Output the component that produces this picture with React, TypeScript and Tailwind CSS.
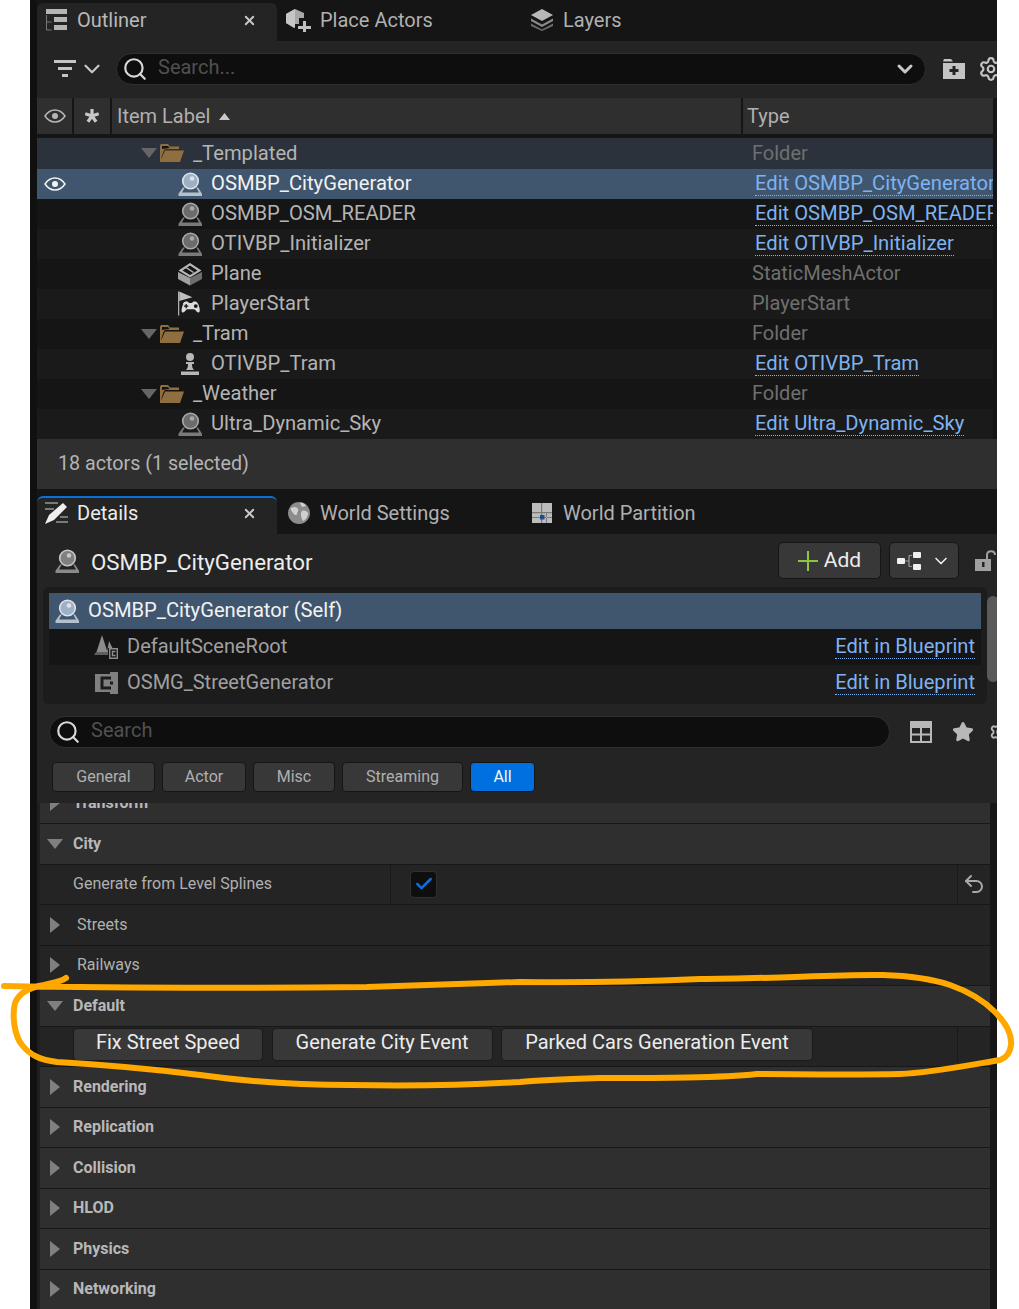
import React from "react";
import { ChevronDown, Search, Settings, Star, Undo2, X, Check } from "lucide-react";

const font = { fontFamily: "Roboto, 'Liberation Sans', sans-serif" };

const EyeIcon = ({ color = "#b5b5b5" }: { color?: string }) => (
  <svg width="22" height="14" viewBox="0 0 22 14" fill="none">
    <path d="M1 7C4 2.500 7.500 1 11 1s7 1.500 10 6c-3 4.500-6.500 6-10 6S4 11.500 1 7Z" stroke={color} strokeWidth="1.500" />
    <circle cx="11" cy="7" r="3" fill={color} />
  </svg>
);

const AsteriskIcon = () => (
  <svg width="16" height="16" viewBox="0 0 16 16" stroke="#c8c8c8" strokeWidth="3.200">
    <path d="M8 8V1M8 8l6.700-2.200M8 8l4.100 5.700M8 8l-4.100 5.700M8 8 1.300 5.800" />
  </svg>
);

const ActorIcon = ({ rim = "#a8a8a8", fill = "#6c6c6c", base = "#7a7a7a" }: { rim?: string; fill?: string; base?: string }) => (
  <svg width="24" height="24" viewBox="0 0 24 24">
    <circle cx="12.500" cy="9" r="8.600" fill={rim} />
    <circle cx="12.500" cy="9" r="7" fill={fill} />
    <circle cx="14" cy="6.500" r="2.300" fill={rim} />
    <path d="M5 15.500h1.800L4 20.500h17l-2.800-5H20l4 6.200V24H0.500v-2.300Z" fill={base} />
  </svg>
);

const SelectedActorIcon = () => <ActorIcon rim="#dde3ea" fill="#9fb0c4" base="#b4c0cc" />;

const FolderIcon = () => (
  <svg width="24" height="18" viewBox="0 0 24 18">
    <path d="M0 18V1.500L1 0h7l2 2.500h9V5H5L3.500 7 1.500 13V18Z" fill="#8f6f3f" />
    <path d="M0 18 5 6.500h19L20 18Z" fill="#8f6f3f" />
    <path d="M2 5V2h6l1.500 2Z" fill="#151515" />
  </svg>
);

const MeshIcon = () => (
  <svg width="24" height="24" viewBox="0 0 24 24">
    <path d="M0 10v7l12 6.500V16Z" fill="#a0a0a0" />
    <path d="M24 10v7l-12 6.500V16Z" fill="#6e6e6e" />
    <path d="M12 1 0.500 8.500 12 15.500l11.500-7ZM12 3.500l7.500 5-7.500 4.500-7.500-4.500Z" fill="#b8b8b8" fillRule="evenodd" />
    <path d="M8 5.500l7.500 5" stroke="#b8b8b8" strokeWidth="1.500" />
  </svg>
);

const PlayerStartIcon = () => (
  <svg width="25" height="25" viewBox="0 0 25 25">
    <path d="M0 0h1.300v25H0Z" fill="#b0b0b0" />
    <path d="M1.300 0 15 6 1.300 10Z" fill="#c0c0c0" />
    <path d="M5 13c1-2 2-2.500 4-2.500h1l1.500 1.500h3l1.500-1.500h1.500c2.500 0 3.500 2 4.500 5.500 1 3.500 1 6-.8 6-1.700 0-3-3.500-4.500-3.500h-7c-1.500 0-2.800 3.500-4.500 3.500-1.800 0-1.800-2.500-.8-6 .2-1 .5-2 1.100-3Z" fill="#dcdcdc" />
    <path d="M8.500 13v4.500M6.200 15.200h4.600" stroke="#151515" strokeWidth="1.400" />
    <circle cx="18.500" cy="15.200" r="2" fill="#151515" />
  </svg>
);

const PawnIcon = () => (
  <svg width="20" height="22" viewBox="0 0 20 22">
    <circle cx="10" cy="4" r="4" fill="#b8b8b8" />
    <path d="M6 9h8v2h-2c0 3 .5 4.500 2 6H6c1.500-1.500 2-3 2-6H6Z" fill="#b8b8b8" />
    <path d="M1 18.500h18V22H1Z" fill="#b8b8b8" />
  </svg>
);

const OutlinerIcon = () => (
  <svg width="22" height="22" viewBox="0 0 22 22">
    <path d="M1 0h21v5H1ZM9 8h13v5H9ZM9 16h13v5H9Z" fill="#b5b5b5" />
    <path d="M1.500 6v15h5M1.500 13h5" stroke="#777777" strokeWidth="1" fill="none" />
  </svg>
);

const PlaceActorsIcon = () => (
  <svg width="26" height="24" viewBox="0 0 26 24">
    <path d="M0 6 9 1l9 4v5h-5v6H9l-1 4-8-5Z" fill="#a8a8a8" />
    <path d="M9 1v19l-9-5V6Z" fill="#c6c6c6" />
    <path d="M17 13h3v5h5v3h-5v3h-3v-3h-5v-3h5Z" fill="#c0c0c0" />
  </svg>
);

const LayersIcon = () => (
  <svg width="22" height="22" viewBox="0 0 22 22">
    <path d="M11 0 22 6l-11 6L0 6Z" fill="#b8b8b8" />
    <path d="M0 9.500l11 6 11-6v2.500l-11 6-11-6Z" fill="#8a8a8a" />
    <path d="M0 14.500l11 6 11-6V17l-11 5-11-5Z" fill="#6e6e6e" />
  </svg>
);

const FilterIcon = () => (
  <svg width="22" height="18" viewBox="0 0 22 18" className="shrink-0">
    <path d="M0 0h22v3H0ZM4 7h14v3H4ZM8 14h6v3H8Z" fill="#c4c4c4" />
  </svg>
);

const FolderPlusIcon = () => (
  <svg width="22" height="20" viewBox="0 0 22 20">
    <path d="M0 2.500 1 0h7l2 2.500Z" fill="#c4c4c4" />
    <path d="M0 4h22v16H0Z" fill="#c4c4c4" />
    <path d="M9.500 7h3v3h3v3h-3v3h-3v-3h-3v-3h3Z" fill="#242424" />
  </svg>
);

const PencilIcon = () => (
  <svg width="24" height="24" viewBox="0 0 24 24">
    <path d="M1 1h13v2H1ZM1 7h9v2H1ZM12 20h12v2H12ZM16 15h8v2h-8Z" fill="#7a7a7a" />
    <path d="M19 2l4 4-13 13-9 4 4-9Z" fill="#eeeeee" />
  </svg>
);

const GlobeIcon = () => (
  <svg width="22" height="22" viewBox="0 0 22 22">
    <circle cx="11" cy="11" r="11" fill="#8c8c8c" />
    <path d="M3 6c3-2 6-1 7 1s-1 3-1 5-3 1-4-1-3-3-2-5ZM14 9c2-1 5 0 6 2 0 3-2 7-5 8-2-3-3-8-1-10ZM12 1c2-1 5 1 6 3l-4 1Z" fill="#d0d0d0" />
  </svg>
);

const PartitionIcon = () => (
  <svg width="20" height="20" viewBox="0 0 20 20">
    <rect width="20" height="20" fill="#bcbcbc" />
    <path d="M9 0h1.200v20H9ZM0 9h20v1.200H0ZM0 14h20v1H0ZM14 10v10h1V10Z" fill="#7a7a7a" />
    <rect x="8" y="12" width="4.500" height="4.500" fill="#1b4f94" />
  </svg>
);

const TreeNodesIcon = () => (
  <svg width="25" height="18" viewBox="0 0 25 18">
    <path d="M7 9h5M12 3.500h3M12 14.500h3M12 3.500v11" stroke="#9a9a9a" strokeWidth="1.200" fill="none" />
    <rect y="6" width="8" height="6" rx="1" fill="#f0f0f0" />
    <rect x="16" y="0" width="8" height="6" rx="1" fill="#f0f0f0" />
    <rect x="16" y="12" width="8" height="6" rx="1" fill="#f0f0f0" />
  </svg>
);

const LockIcon = () => (
  <svg width="22" height="22" viewBox="0 0 22 22">
    <path d="M0 9h16v12H0Z" fill="#a0a0a0" />
    <rect x="7" y="12" width="2.500" height="5" fill="#242424" />
    <path d="M12 9V5c0-5 8-5 8 0" stroke="#a0a0a0" strokeWidth="2" fill="none" />
  </svg>
);

const SceneRootIcon = () => (
  <svg width="24" height="24" viewBox="0 0 24 24">
    <path d="M8 0l5.500 17H2.500Z" fill="#8c8c8c" />
    <path d="M15 6l3.500 7H14v4h-1Z" fill="#8c8c8c" />
    <path d="M2 17h12v3H0Z" fill="#5e5e5e" />
    <path d="M15.700 13.700h7.600v9.600h-7.600Z" fill="none" stroke="#8c8c8c" strokeWidth="1.400" />
    <path d="M21.500 16.500h-3v4h3" fill="none" stroke="#8c8c8c" strokeWidth="1.400" />
  </svg>
);

const ComponentIcon = () => (
  <svg width="23" height="22" viewBox="0 0 23 22">
    <path d="M0 2h15V0h8v22h-8v-2H0Z" fill="#808080" />
    <path d="M16 6H7v10h9" fill="none" stroke="#1c1c1c" strokeWidth="3" />
    <path d="M15 9.500h3v3h-3Z" fill="#1c1c1c" />
  </svg>
);

const TableIcon = () => (
  <svg width="22" height="22" viewBox="0 0 22 22">
    <path d="M1 1h20v20H1Z" fill="none" stroke="#b8b8b8" strokeWidth="2" />
    <path d="M1 1h20v6H1ZM1 12.500h20v2H1ZM10 7h2v14h-2Z" fill="#b8b8b8" />
  </svg>
);

const TriDown = ({ color = "#808080" }: { color?: string }) => (
  <svg width="16" height="10" viewBox="0 0 16 10"><path d="M0 0h16L8 10Z" fill={color} /></svg>
);

const TriRight = () => (
  <svg width="10" height="16" viewBox="0 0 10 16"><path d="M0 0l10 8-10 8Z" fill="#808080" /></svg>
);

const outlinerRows = [
  { label: "_Templated", type: "Folder", kind: "folder", bg: "bg-[#2b323b]", tall: true },
  { label: "OSMBP_CityGenerator", type: "Edit OSMBP_CityGenerator", link: true, kind: "actor", bg: "bg-[#40566f]", selected: true },
  { label: "OSMBP_OSM_READER", type: "Edit OSMBP_OSM_READER", link: true, kind: "actor", bg: "bg-[#151515]" },
  { label: "OTIVBP_Initializer", type: "Edit OTIVBP_Initializer", link: true, kind: "actor", bg: "bg-[#1a1a1a]" },
  { label: "Plane", type: "StaticMeshActor", kind: "mesh", bg: "bg-[#151515]" },
  { label: "PlayerStart", type: "PlayerStart", kind: "start", bg: "bg-[#1a1a1a]" },
  { label: "_Tram", type: "Folder", kind: "folder", bg: "bg-[#151515]" },
  { label: "OTIVBP_Tram", type: "Edit OTIVBP_Tram", link: true, kind: "pawn", bg: "bg-[#1a1a1a]" },
  { label: "_Weather", type: "Folder", kind: "folder", bg: "bg-[#151515]" },
  { label: "Ultra_Dynamic_Sky", type: "Edit Ultra_Dynamic_Sky", link: true, kind: "actor", bg: "bg-[#1a1a1a]" },
];

const OutlinerRow = ({ row }: { row: (typeof outlinerRows)[number] }) => (
  <div className={`flex w-[956px] items-center ${row.tall ? "h-[31px]" : "h-[30px]"} ${row.bg}`}>
    <div className="flex w-[36px] shrink-0 justify-center">{row.selected && <EyeIcon color="#f2f2f2" />}</div>
    {row.kind === "folder" ? (
      <div className="flex w-[669px] shrink-0 items-center pl-[68px]">
        <TriDown color="#666666" />
        <span className="ml-[3px]"><FolderIcon /></span>
        <span className={`ml-[9px] text-[20.2px] text-[#b4b4b4] ${row.tall ? "" : "-mt-[2px]"}`}>{row.label}</span>
      </div>
    ) : (
      <div className="flex w-[669px] shrink-0 items-center pl-[105px]">
        <span className="flex w-[24px] justify-center">
          {row.kind === "actor" && (row.selected ? <SelectedActorIcon /> : <ActorIcon />)}
          {row.kind === "mesh" && <MeshIcon />}
          {row.kind === "start" && <PlayerStartIcon />}
          {row.kind === "pawn" && <PawnIcon />}
        </span>
        <span className={`-mt-[2px] ml-[9px] text-[20.2px] ${row.selected ? "text-[#f2f2f2]" : "text-[#b4b4b4]"}`}>{row.label}</span>
      </div>
    )}
    <div className="min-w-0 flex-1 overflow-hidden whitespace-nowrap">
      {row.link ? (
        <span className="ml-[13px] inline-block border-b border-dotted border-[#7fb2f0] text-[20.2px] leading-[24px] text-[#7fb2f0]">{row.type}</span>
      ) : (
        <span className="relative -top-px ml-[10px] text-[20px] text-[#6f6f6f]">{row.type}</span>
      )}
    </div>
  </div>
);

const Tab = ({ icon, label }: { icon: React.ReactNode; label: string }) => (
  <div className="flex h-[38px] w-[243px] shrink-0 items-center pb-[4px]">
    <span className="flex w-[43px] shrink-0 justify-center pl-px">{icon}</span>
    <span className="text-[20px] text-[#b0b0b0]">{label}</span>
  </div>
);

const PillSearch = ({ width, placeholder, arrow }: { width: string; placeholder: string; arrow?: boolean }) => (
  <div className={`flex h-[32px] ${width} shrink-0 items-center rounded-full border border-[#2f2f2f] bg-[#0e0e0e] pl-[5px] pr-[8px]`}>
    <Search size={26} strokeWidth={2} color="#d8d8d8" />
    <span className="-mt-[4px] ml-[10px] text-[20px] text-[#505050]">{placeholder}</span>
    {arrow && <ChevronDown size={24} strokeWidth={3} color="#c8c8c8" className="ml-auto" />}
  </div>
);

const chips = [
  { label: "General", w: "w-[103px]" },
  { label: "Actor", w: "w-[84px]" },
  { label: "Misc", w: "w-[82px]" },
  { label: "Streaming", w: "w-[121px]" },
];

const SectionRow = ({ label, open, dark, small }: { label: string; open?: boolean; dark?: boolean; small?: boolean }) => (
  <div className={`flex h-[39.5px] shrink-0 items-center ${dark ? "bg-[#242424]" : "bg-[#2f2f2f]"}`}>
    <span className={`flex w-[33px] shrink-0 ${open ? "pl-[7px]" : "pl-[10px]"}`}>{open ? <TriDown /> : <TriRight />}</span>
    <span className={`text-[16px] ${small ? "ml-[4px] text-[#b0b0b0]" : "font-bold text-[#b8b8b8]"}`}>{label}</span>
  </div>
);

const Blueprint = () => (
  <span className="-mt-[2px] ml-auto mr-[6px] inline-block border-b border-dotted border-[#7fb2f0] text-[20.1px] leading-[24px] text-[#7fb2f0]">Edit in Blueprint</span>
);

const EventButton = ({ label, w }: { label: string; w: string }) => (
  <div className={`flex h-[33px] ${w} shrink-0 items-center justify-center rounded-[4px] border border-[#1a1a1a] bg-[#383838] pb-[4px] text-[20px] text-[#ececec]`}>{label}</div>
);

const App = () => (
  <div className="relative h-[1309px] w-[1019px] overflow-hidden bg-white" style={font}>
    <div className="ml-[30px] flex h-full w-[967px] flex-col overflow-hidden bg-[#101010] pl-[7px]">
      {/* Outliner */}
      <div className="flex h-[41px] w-[960px] shrink-0 items-end bg-[#151515]">
        <div className="flex h-[38px] w-[240px] shrink-0 items-center rounded-t-md bg-[#242424] pb-[4px] pl-[8px] pr-[20px]">
          <OutlinerIcon />
          <span className="ml-[10px] text-[20px] text-[#b8b8b8]">Outliner</span>
          <X size={15} strokeWidth={3} color="#c8c8c8" className="ml-auto" />
        </div>
        <Tab icon={<PlaceActorsIcon />} label="Place Actors" />
        <Tab icon={<LayersIcon />} label="Layers" />
      </div>
      <div className="flex h-[57px] w-[960px] shrink-0 items-center bg-[#242424] pb-px pl-[17px]">
        <FilterIcon />
        <ChevronDown size={26} strokeWidth={2} color="#c8c8c8" className="ml-[3px] shrink-0" />
        <div className="ml-[11px] shrink-0"><PillSearch width="w-[810px]" placeholder="Search..." arrow /></div>
        <span className="ml-[17px] shrink-0"><FolderPlusIcon /></span>
        <Settings size={26} strokeWidth={2} color="#c4c4c4" className="ml-[13px] shrink-0" />
      </div>
      <div className="flex w-[960px] shrink-0 flex-col bg-[#151515]">
        <div className="flex h-[36px] w-[956px] gap-[2px] text-[20px] text-[#b0b0b0]">
          <div className="flex w-[35px] items-center justify-center bg-[#2f2f2f]"><EyeIcon /></div>
          <div className="flex w-[36px] items-center justify-center bg-[#2f2f2f]"><AsteriskIcon /></div>
          <div className="flex w-[629px] items-center bg-[#2f2f2f] pl-[5px]">
            Item Label
            <svg width="11" height="7" viewBox="0 0 11 7" className="ml-[9px]"><path d="M5.500 0 11 7H0Z" fill="#c8c8c8" /></svg>
          </div>
          <div className="flex flex-1 items-center bg-[#2f2f2f] pl-[4px]">Type</div>
        </div>
        <div className="mt-[4px] flex flex-col">
          {outlinerRows.map((row) => (
            <OutlinerRow key={row.label} row={row} />
          ))}
        </div>
      </div>
      <div className="flex h-[50px] w-[960px] shrink-0 items-center bg-[#2f2f2f] pb-px pl-[21px] text-[19.7px] text-[#b4b4b4]">18 actors (1 selected)</div>

      {/* Details */}
      <div className="flex h-[45px] w-[960px] shrink-0 items-end bg-[#151515]">
        <div className="flex h-[38px] w-[240px] shrink-0 items-center rounded-t-md border-t-2 border-[#0a6fd8] bg-[#242424] pb-[6px] pl-[7px] pr-[20px]">
          <PencilIcon />
          <span className="ml-[9px] text-[20px] text-[#ececec]">Details</span>
          <X size={15} strokeWidth={3} color="#c8c8c8" className="ml-auto" />
        </div>
        <Tab icon={<GlobeIcon />} label="World Settings" />
        <Tab icon={<PartitionIcon />} label="World Partition" />
      </div>
      <div className="flex h-[53px] w-[960px] shrink-0 items-center bg-[#242424] pl-[18px]">
        <ActorIcon rim="#c8c8c8" fill="#808080" base="#8a8a8a" />
        <span className="ml-[12px] mt-[5px] text-[22.3px] text-[#ececec]">OSMBP_CityGenerator</span>
        <div className="ml-auto flex h-[37px] w-[103px] items-center justify-center gap-[6px] rounded-[5px] border border-[#151515] bg-[#383838] pt-px text-[21px] text-[#ececec]">
          <svg width="20" height="20" viewBox="0 0 20 20"><path d="M9 0h2v9h9v2h-9v9H9v-9H0V9h9Z" fill="#8cc63f" /></svg>
          Add
        </div>
        <div className="ml-[8px] flex h-[37px] w-[70px] items-center justify-center gap-[9px] rounded-[5px] border border-[#151515] bg-[#383838]">
          <TreeNodesIcon />
          <ChevronDown size={20} strokeWidth={2} color="#ececec" />
        </div>
        <span className="ml-[16px] w-[22px] shrink-0"><LockIcon /></span>
      </div>
      <div className="flex w-[960px] shrink-0 bg-[#242424]">
        <div className="ml-[6px] flex h-[117px] w-[944px] shrink-0 flex-col rounded-md bg-[#1c1c1c] px-[6px] pt-[6px]">
          <div className="flex h-[36px] shrink-0 items-center bg-[#40566f] pl-[6px] text-[20.2px] text-[#f2f2f2]">
            <SelectedActorIcon />
            <span className="-mt-[2px] ml-[9px]">OSMBP_CityGenerator (Self)</span>
          </div>
          <div className="flex h-[36px] shrink-0 items-center bg-[#151515] pl-[45px] text-[20px] text-[#a0a0a0]">
            <SceneRootIcon />
            <span className="-mt-[2px] ml-[9px]">DefaultSceneRoot</span>
            <Blueprint />
          </div>
          <div className="flex h-[36px] shrink-0 items-center pl-[46px] text-[20px] text-[#a0a0a0]">
            <ComponentIcon />
            <span className="-mt-[2px] ml-[9px]">OSMG_StreetGenerator</span>
            <Blueprint />
          </div>
        </div>
        <div className="mt-[9px] h-[86px] w-[12px] shrink-0 rounded-md bg-[#5a5a5a]" />
      </div>
      <div className="flex h-[44px] w-[960px] shrink-0 items-end bg-[#242424] pl-[12px]">
        <PillSearch width="w-[841px]" placeholder="Search" />
        <span className="mb-[5px] ml-[20px]"><TableIcon /></span>
        <Star size={22} fill="#b8b8b8" color="#b8b8b8" className="mb-[5px] ml-[20px] shrink-0" />
        <Settings size={22} strokeWidth={2} color="#b8b8b8" className="mb-[5px] ml-[15px] shrink-0" />
      </div>
      <div className="flex h-[55px] w-[960px] shrink-0 gap-[7px] bg-[#242424] pl-[15px] pt-[14px]">
        {chips.map((chip) => (
          <div key={chip.label} className={`flex h-[30px] ${chip.w} items-center justify-center rounded-[4px] border border-[#151515] bg-[#383838] text-[16px] text-[#b0b0b0]`}>{chip.label}</div>
        ))}
        <div className="flex h-[30px] w-[65px] items-center justify-center rounded-[4px] border border-[#151515] bg-[#0070e0] text-[16px] text-[#f4f4f4]">All</div>
      </div>

      {/* Property list */}
      <div className="flex w-[960px] min-h-0 flex-1 bg-[#171717]">
        <div className="w-[3px] shrink-0 bg-[#1f1f1f]" />
        <div className="flex w-[950px] shrink-0 flex-col gap-px overflow-hidden">
          <div className="-mt-[19.5px]"><SectionRow label="Transform" /></div>
          <SectionRow label="City" open />
          <div className="flex h-[39.5px] shrink-0 items-center bg-[#242424]">
            <span className="w-[351px] shrink-0 self-stretch border-r border-[#1a1a1a] pl-[33px] pt-[7px] text-[16px] text-[#b0b0b0]">Generate from Level Splines</span>
            <div className="ml-[19px] flex h-[27px] w-[27px] items-center justify-center rounded-[4px] border border-[#2f2f2f] bg-[#0e0e0e]">
              <Check size={20} strokeWidth={3} color="#0a70e0" />
            </div>
            <div className="ml-auto flex h-full w-[33px] items-center justify-center border-l border-[#1a1a1a]">
              <Undo2 size={24} strokeWidth={2} color="#a8a8a8" />
            </div>
          </div>
          <SectionRow label="Streets" dark small />
          <SectionRow label="Railways" dark small />
          <SectionRow label="Default" open />
          <div className="flex h-[39.5px] shrink-0 items-center gap-[8.5px] bg-[#242424] pb-[4px] pl-[33px]">
            <EventButton label="Fix Street Speed" w="w-[190px]" />
            <EventButton label="Generate City Event" w="w-[221px]" />
            <EventButton label="Parked Cars Generation Event" w="w-[312px]" />
            <div className="ml-auto h-full w-[33px] border-l border-[#1a1a1a]" />
          </div>
          {["Rendering", "Replication", "Collision", "HLOD", "Physics", "Networking"].map((label) => (
            <SectionRow key={label} label={label} />
          ))}
        </div>
      </div>
    </div>

    {/* hand drawn marker round the Default section */}
    <svg className="pointer-events-none absolute left-0 top-0" width="1019" height="1309" viewBox="0 0 1019 1309" fill="none">
      <path
        d="M4 986 C120 988 250 988 367 987 C430 985 480 983 520 982 C580 983 630 982 700 979 C770 979 840 974 883 975 C915 976 935 980 950 985 C970 992 985 1002 995 1012 C1008 1025 1012 1035 1011 1045 C1010 1054 1006 1058 1000 1060 C970 1065 930 1073 900 1074 C850 1075 790 1074 757 1074 C720 1078 660 1078 600 1078 C570 1079 540 1080 520 1082 C470 1085 400 1086 350 1085 C300 1085 250 1082 200 1075 C160 1070 110 1065 57 1062 C40 1060 30 1055 22 1045 C14 1035 12 1015 15 1003 C19 993 28 988 44 985 C52 983 60 982 66 978"
        stroke="#ffa800"
        strokeWidth="6"
        strokeLinecap="round"
        strokeLinejoin="round"
      />
    </svg>
  </div>
);

export default App;
